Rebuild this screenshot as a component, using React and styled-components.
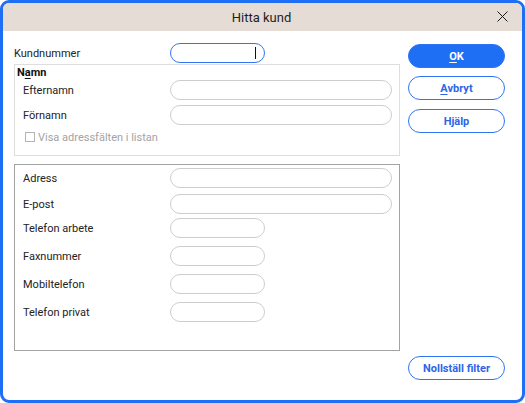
import React from 'react';
import styled, { createGlobalStyle } from 'styled-components';

const Global = createGlobalStyle`
  html, body { margin: 0; padding: 0; background: #ffffff; }
  body { font-family: Roboto, "Liberation Sans", sans-serif; }
`;

const Window = styled.div`
  width: 525px;
  height: 403px;
  box-sizing: border-box;
  border: 3px solid #1f6ff5;
  border-radius: 9px;
  background: #ffffff;
  display: flex;
  flex-direction: column;
  overflow: hidden;
`;

const TitleBar = styled.div`
  height: 28px;
  flex: none;
  background: #e6dcd6;
  display: flex;
  align-items: center;
`;

const Title = styled.div`
  flex: 1;
  text-align: center;
  font-size: 13px;
  color: #1e1e1e;
  padding-left: 36px;
  padding-right: 36px;
  padding-top: 1px;
  margin-right: -36px;
`;

const Close = styled.button`
  width: 36px;
  height: 28px;
  border: none;
  background: transparent;
  padding: 0;
  display: flex;
  align-items: center;
  justify-content: center;
  margin-right: 2px;
  margin-top: -2px;
`;

const Body = styled.div`
  flex: 1;
  display: flex;
  gap: 8px;
  padding: 12px 17px 0 11px;
`;

const LeftCol = styled.div`
  width: 386px;
  display: flex;
  flex-direction: column;
`;

const RightCol = styled.div`
  width: 97px;
  display: flex;
  flex-direction: column;
  padding-top: 1px;
  padding-bottom: 20px;
`;

const Row = styled.div`
  display: flex;
  align-items: center;
  height: 20px;
  margin-top: ${p => p.$top || 0}px;
  padding-left: ${p => p.$indent || 0}px;
`;

const Label = styled.div`
  width: ${p => p.$w}px;
  flex: none;
  font-size: 11px;
  color: #222222;
`;

const Field = styled.div`
  width: ${p => p.$w}px;
  height: 20px;
  box-sizing: border-box;
  border: 1px solid ${p => (p.$focus ? '#2f76ef' : '#cdcdcd')};
  border-radius: 10px;
  background: #ffffff;
  position: relative;
`;

const Caret = styled.span`
  position: absolute;
  right: 8px;
  top: 3px;
  width: 1px;
  height: 12px;
  background: #111111;
`;

const Group = styled.div`
  box-sizing: border-box;
  height: ${p => p.$h}px;
  margin-top: ${p => p.$top}px;
  border: 1px solid ${p => p.$border};
  padding: ${p => p.$pad};
`;

const Legend = styled.div`
  font-size: 11px;
  font-weight: 700;
  color: #111111;
  line-height: 14px;
  padding-left: 2px;
`;

const CheckRow = styled.div`
  display: flex;
  align-items: center;
  height: 14px;
  margin-top: 5px;
  padding-left: 10px;
  gap: 3px;
  font-size: 11px;
  color: #a3a3a3;
`;

const Box = styled.span`
  width: 10px;
  height: 10px;
  box-sizing: border-box;
  border: 1px solid #b4b4b4;
  background: #ffffff;
`;

const Btn = styled.button`
  height: 24px;
  box-sizing: border-box;
  border-radius: 12px;
  border: 1px solid #2f74f2;
  background: ${p => (p.$primary ? '#1f6ff5' : '#ffffff')};
  color: ${p => (p.$primary ? '#ffffff' : '#2c66e6')};
  font-family: Roboto, "Liberation Sans", sans-serif;
  font-size: 11px;
  font-weight: 700;
  padding: 0;
  margin-top: ${p => p.$top || 0}px;
`;

const Spacer = styled.div`
  flex: 1;
`;

const U = styled.span`
  text-decoration: underline;
  text-underline-offset: 2px;
`;

const plainRows = [
  { label: 'Adress', w: 222, top: 0 },
  { label: 'E-post', w: 222, top: 6 },
  { label: 'Telefon arbete', w: 95, top: 4 },
  { label: 'Faxnummer', w: 95, top: 8 },
  { label: 'Mobiltelefon', w: 95, top: 8 },
  { label: 'Telefon privat', w: 95, top: 8 },
];

export default function App() {
  return (
    <>
      <Global />
      <Window>
        <TitleBar>
          <Title>Hitta kund</Title>
          <Close aria-label="Stäng">
            <svg width="11" height="11" viewBox="0 0 11 11">
              <path d="M0.5 0.5 L10.5 10.5 M10.5 0.5 L0.5 10.5" stroke="#1a1a1a" strokeWidth="1" fill="none" />
            </svg>
          </Close>
        </TitleBar>
        <Body>
          <LeftCol>
            <Row>
              <Label $w={156}>Kundnummer</Label>
              <Field $w={95} $focus><Caret /></Field>
            </Row>
            <Group $h={92} $top={1} $border="#dedede" $pad="1px 0 0 0">
              <Legend>N<U>a</U>mn</Legend>
              <Row $indent={8}>
                <Label $w={147}>Efternamn</Label>
                <Field $w={222} />
              </Row>
              <Row $indent={8} $top={5}>
                <Label $w={147}>Förnamn</Label>
                <Field $w={222} />
              </Row>
              <CheckRow>
                <Box />
                Visa adressfälten i listan
              </CheckRow>
            </Group>
            <Group $h={187} $top={8} $border="#a3a3a3" $pad="3px 0 0 0">
              {plainRows.map(r => (
                <Row key={r.label} $indent={8} $top={r.top}>
                  <Label $w={147}>{r.label}</Label>
                  <Field $w={r.w} />
                </Row>
              ))}
            </Group>
          </LeftCol>
          <RightCol>
            <Btn $primary><U>O</U>K</Btn>
            <Btn $top={8}><U>A</U>vbryt</Btn>
            <Btn $top={9}>Hjälp</Btn>
            <Spacer />
            <Btn>Nollställ filter</Btn>
          </RightCol>
        </Body>
      </Window>
    </>
  );
}
